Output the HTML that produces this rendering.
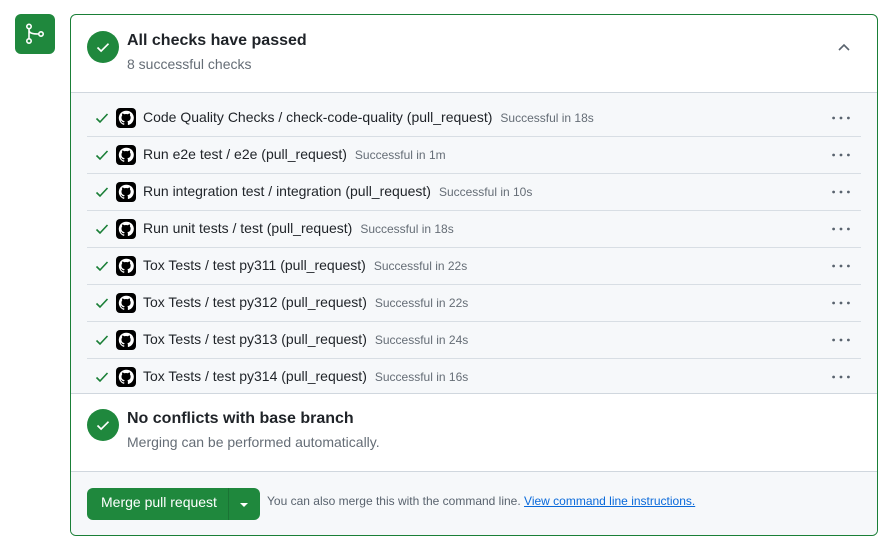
<!DOCTYPE html><html><head><style>
body{margin:0;width:895px;height:540px;background:#fff;font-family:"Liberation Sans",sans-serif;position:relative;overflow:hidden}
.icon{position:absolute;left:15px;top:14px;width:40px;height:40px;border-radius:6px;background:#1f883d}
.box{position:absolute;left:70px;top:14px;width:806px;height:520px;border:1px solid #1a7f37;border-radius:6px;overflow:hidden}
.circ{position:absolute;width:32px;height:32px;border-radius:50%;background:#1f883d}
.h{position:absolute;font-weight:bold;font-size:16px;color:#1f2328}
.s{position:absolute;font-size:14px;color:#656d76}
.rows{position:absolute;left:0;top:77px;width:806px;height:300px;background:#f6f8fa;border-top:1px solid #d0d7de;border-bottom:1px solid #d0d7de}
.row{position:absolute;left:16px;width:774px;height:37px;border-bottom:1px solid #d8dee4}
.row .ck{position:absolute;left:8px;top:12px}
.row .gh{position:absolute;left:29px;top:9px;width:20px;height:20px;border-radius:4px;background:#000}
.row .t{position:absolute;left:56px;top:10px;font-size:14px;color:#1f2328;white-space:nowrap}
.row .t small{font-size:12px;color:#656d76;margin-left:8px}
.row .d{position:absolute;right:11px;top:17px}
.foot{position:absolute;left:0;top:456px;width:806px;height:64px;background:#f6f8fa;border-top:1px solid #d0d7de}
.btn{position:absolute;left:16px;top:16px;width:173px;height:32px;background:#1f883d;border-radius:6px;color:#fff;font-size:14px}
</style></head><body>
<div class="icon"><svg width="40" height="40" viewBox="0 0 40 40" fill="none" stroke="#fff" stroke-width="1.6"><circle cx="14" cy="12.5" r="2.2"/><circle cx="14" cy="27" r="2.2"/><circle cx="26" cy="20" r="2.2"/><path d="M14 14.7v10.1M14 16c0 3 3 4 9.8 4"/></svg></div>
<div class="box">
<div class="circ" style="left:16px;top:16px"><svg width="32" height="32"><path d="M10.5 16.5l3.6 3.6 7.4-7.4" stroke="#fff" stroke-width="1.7" fill="none"/></svg></div>
<div class="h" style="left:56px;top:17px">All checks have passed</div>
<div class="s" style="left:56px;top:41px">8 successful checks</div>
<svg style="position:absolute;left:767px;top:28px" width="12" height="10"><path d="M1 7l5-5 5 5" stroke="#59636e" stroke-width="1.6" fill="none"/></svg>
<div class="rows">
<div class="row" style="top:6px"><svg class="ck" width="14" height="14"><path d="M1.5 7.5l3.5 3.5 7.5-8" stroke="#1a7f37" stroke-width="1.6" fill="none"/></svg><div class="gh"><svg width="20" height="20" viewBox="0 0 16 16"><path fill="#fff" d="M8 2.2a5.8 5.8 0 0 0-1.8 11.3c.3 0 .4-.1.4-.3v-1c-1.6.3-2-.7-2-.7-.3-.7-.7-.9-.7-.9-.5-.4 0-.4 0-.4.6 0 .9.6.9.6.5.9 1.4.7 1.800.5 0-.4.2-.7.4-.8-1.3-.2-2.600-.7-2.600-2.900 0-.6.2-1.200.6-1.600-.1-.1-.3-.8 0-1.600 0 0 .5-.2 1.600.6a5.500 5.500 0 0 1 2.900 0c1.100-.8 1.600-.6 1.600-.6.3.8.1 1.500 0 1.600.4.4.6 1 .6 1.600 0 2.200-1.300 2.700-2.600 2.900.2.2.4.6.4 1.100v1.700c0 .2.1.3.4.3A5.800 5.800 0 0 0 8 2.200z"/></svg></div><div class="t">x</div><svg class="d" width="18" height="4"><circle cx="1.6" cy="2" r="1.4" fill="#59636e"/><circle cx="9" cy="2" r="1.4" fill="#59636e"/><circle cx="16.4" cy="2" r="1.4" fill="#59636e"/></svg></div>
</div>
<div class="circ" style="left:16px;top:394px"><svg width="32" height="32"><path d="M10.5 16.5l3.6 3.6 7.4-7.4" stroke="#fff" stroke-width="1.7" fill="none"/></svg></div>
<div class="h" style="left:56px;top:395px">No conflicts with base branch</div>
<div class="s" style="left:56px;top:419px">Merging can be performed automatically.</div>
<div class="foot">
<div class="btn"><span style="position:absolute;left:14px;top:6px">Merge pull request</span><div style="position:absolute;left:141px;top:0;width:1px;height:32px;background:#1a7434"></div><svg style="position:absolute;left:152px;top:14px" width="10" height="6"><path d="M1 1h8L5 5z" fill="#fff"/></svg></div>
<div style="position:absolute;left:196px;top:22px;font-size:12px;color:#59636e">You can also merge this with the command line. <span style="color:#0969da;text-decoration:underline">View command line instructions.</span></div>
</div>
</div>
<script>
var d=[["Code Quality Checks / check-code-quality (pull_request)","18s"],["Run e2e test / e2e (pull_request)","1m"],["Run integration test / integration (pull_request)","10s"],["Run unit tests / test (pull_request)","18s"],["Tox Tests / test py311 (pull_request)","22s"],["Tox Tests / test py312 (pull_request)","22s"],["Tox Tests / test py313 (pull_request)","24s"],["Tox Tests / test py314 (pull_request)","16s"]];
var r=document.querySelector('.row'),p=r.parentNode,h=r.outerHTML;r.remove();
d.forEach(function(x,i){var e=document.createElement('div');e.innerHTML=h;var n=e.firstChild;n.style.top=(6+i*37)+'px';if(i==7)n.style.borderBottom='none';n.querySelector('.t').innerHTML=x[0]+'<small>Successful in '+x[1]+'</small>';p.appendChild(n);});
</script>
</body></html>
